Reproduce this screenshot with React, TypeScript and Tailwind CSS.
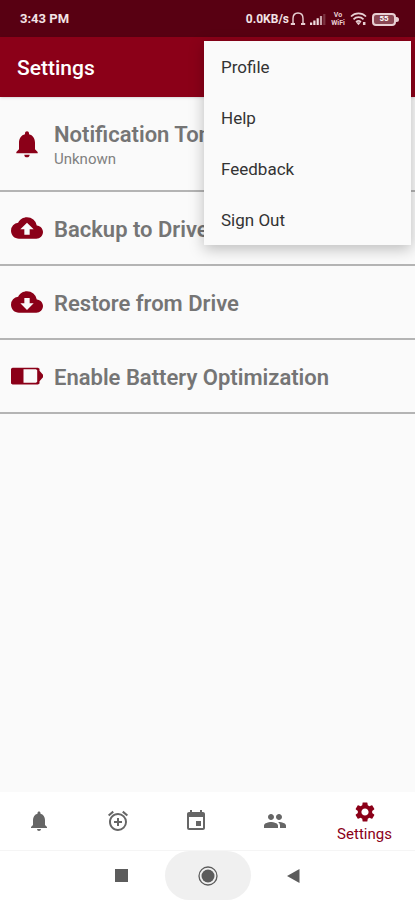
import {
  MdAddAlarm,
  MdCloudDownload,
  MdCloudUpload,
  MdEvent,
  MdNotifications,
  MdPeople,
  MdSettings,
} from 'react-icons/md';

const BatteryIcon = () => (
  <svg className="w-8 h-8" viewBox="0 0 32 32" aria-hidden="true">
    <path
      d="M1.500 7.800h25.500l1.500 1v2l3.500 4v2.400l-3.500 4v2.300l-1.500 1H1.500l-1.500-1V8.800z"
      fill="#8b0018"
    />
    <path d="M12.500 9.300h12.500l1.200 1v11.500l-1.200 1H12.500z" fill="#fafafa" />
  </svg>
);

const StatusIcons = () => (
  <div className="flex items-center gap-1">
    <svg className="w-4 h-4" viewBox="0 0 16 16" fill="none" stroke="#e8cfd3" strokeWidth="1.4">
      <path d="M3 12.500V7.500C3 4 5 2 8 2s5 2 5 5.500v5" />
      <path d="M.8 13h4.200M11 13h4.200" strokeWidth="2" />
    </svg>
    <svg className="w-4 h-4" viewBox="0 0 16 16">
      <path d="M0 11.500h2.200V14H0zM3.300 9.500h2.200V14H3.300zM6.600 7.300h2.200V14H6.600z" fill="#f0dde0" />
      <path d="M9.900 5h2.200v9H9.900z" fill="#c9a3aa" />
      <path d="M13.200 3h2.200v11h-2.200z" fill="#7c3341" />
    </svg>
    <div className="w-4 flex flex-col items-center text-[7px] leading-[8px] font-bold text-[#e8cfd3]">
      <span>Vo</span>
      <span>WiFi</span>
    </div>
    <svg className="w-[18px] h-4" viewBox="0 0 18 16" fill="none" stroke="#e8cfd3" strokeWidth="1.700">
      <path d="M1 5.500a10.500 10.500 0 0 1 15 0M3.500 8.300a7 7 0 0 1 10 0M6 11a3.600 3.600 0 0 1 5 0" />
      <path d="M8.500 14.200l-2.500-3h5z" fill="#e8cfd3" stroke="none" />
      <path d="M14.200 11v3" strokeWidth="2.500" />
    </svg>
    <div className="flex items-center">
      <div className="w-6 h-[13px] rounded border-2 border-[#e8cfd3] bg-[#8a4653] flex items-center justify-center text-[8px] font-bold text-white">
        55
      </div>
      <div className="w-[3px] h-[5px] rounded-r bg-[#e8cfd3]" />
    </div>
  </div>
);

const App = () => {
  const rowClass =
    'w-full h-[74px] pl-[11px] flex items-center gap-[11px] text-left border-b-2 border-[#b4b4b4]';
  const rowTitle = 'pt-[3px] text-[22px] leading-7 font-semibold text-[#757575]';
  const tabClass = 'flex-1 flex items-center justify-center';
  const menuItems = ['Profile', 'Help', 'Feedback', 'Sign Out'];

  return (
    <div
      className="relative min-h-screen flex flex-col bg-[#fafafa]"
      style={{ fontFamily: 'Roboto, sans-serif' }}
    >
      <div className="h-[37px] pl-5 pr-4 pt-px flex items-center justify-between bg-[#580012] text-[13px] font-bold text-[#f3e3e5]">
        <span>3:43 PM</span>
        <div className="flex items-center gap-px">
          <span className="text-xs">0.0KB/s</span>
          <StatusIcons />
        </div>
      </div>

      <header className="h-[60px] px-[17px] pt-[2px] flex items-center bg-[#8b0018] shadow-sm">
        <h1 className="text-[21px] leading-7 font-medium text-white">Settings</h1>
      </header>

      <main className="flex-1">
        <button className="w-full h-[95px] pl-[11px] flex items-center gap-[11px] text-left border-b-2 border-[#b4b4b4]">
          <MdNotifications className="w-8 h-8 text-[#8b0018]" />
          <span className="flex flex-col">
            <span className={rowTitle}>Notification Tone</span>
            <span className="text-[15px] leading-5 text-[#808080]">Unknown</span>
          </span>
        </button>
        <button className={rowClass}>
          <MdCloudUpload className="w-8 h-8 text-[#8b0018]" />
          <span className={rowTitle}>Backup to Drive</span>
        </button>
        <button className={rowClass}>
          <MdCloudDownload className="w-8 h-8 text-[#8b0018]" />
          <span className={rowTitle}>Restore from Drive</span>
        </button>
        <button className={rowClass}>
          <BatteryIcon />
          <span className={rowTitle}>Enable Battery Optimization</span>
        </button>
      </main>

      <nav className="h-[58px] flex bg-white text-[#666]">
        <button className={tabClass} aria-label="Notifications">
          <MdNotifications className="w-6 h-6" />
        </button>
        <button className={tabClass} aria-label="Alarms">
          <MdAddAlarm className="w-6 h-6" />
        </button>
        <button className={tabClass} aria-label="Calendar">
          <MdEvent className="w-6 h-6" />
        </button>
        <button className={tabClass} aria-label="People">
          <MdPeople className="w-6 h-6" />
        </button>
        <button className="w-[101px] pt-[2px] flex flex-col items-center justify-center text-[#8b0018]">
          <MdSettings className="w-6 h-6" />
          <span className="text-[15px] leading-5">Settings</span>
        </button>
      </nav>

      <div className="h-[50px] flex items-center justify-center bg-white border-t border-[#f5f5f5] text-[#5c5c5c]">
        <button className="w-[86px] h-full flex items-center justify-center" aria-label="Recent apps">
          <span className="w-[13px] h-[13px] bg-[#5c5c5c]" />
        </button>
        <button
          className="w-[86px] h-full rounded-full bg-[#f0f0f0] flex items-center justify-center"
          aria-label="Home"
        >
          <svg className="w-5 h-5" viewBox="0 0 20 20" fill="none">
            <circle cx="10" cy="10" r="9" stroke="#5c5c5c" strokeWidth="1.300" />
            <circle cx="10" cy="10" r="6.500" fill="#5c5c5c" />
          </svg>
        </button>
        <button className="w-[86px] h-full flex items-center justify-center" aria-label="Back">
          <svg className="w-[13px] h-[14px]" viewBox="0 0 13 14" fill="#5c5c5c">
            <path d="M0 7L12.500 0v14z" />
          </svg>
        </button>
      </div>

      <div
        role="menu"
        className="absolute top-[41px] right-1 w-[207px] flex flex-col bg-[#fafafa] shadow-[0_4px_14px_rgba(0,0,0,0.25)]"
      >
        {menuItems.map((item) => (
          <button
            key={item}
            role="menuitem"
            className="h-[51px] px-[17px] pt-[3px] text-left text-[17px] text-[#333]"
          >
            {item}
          </button>
        ))}
      </div>
    </div>
  );
};

export default App;
